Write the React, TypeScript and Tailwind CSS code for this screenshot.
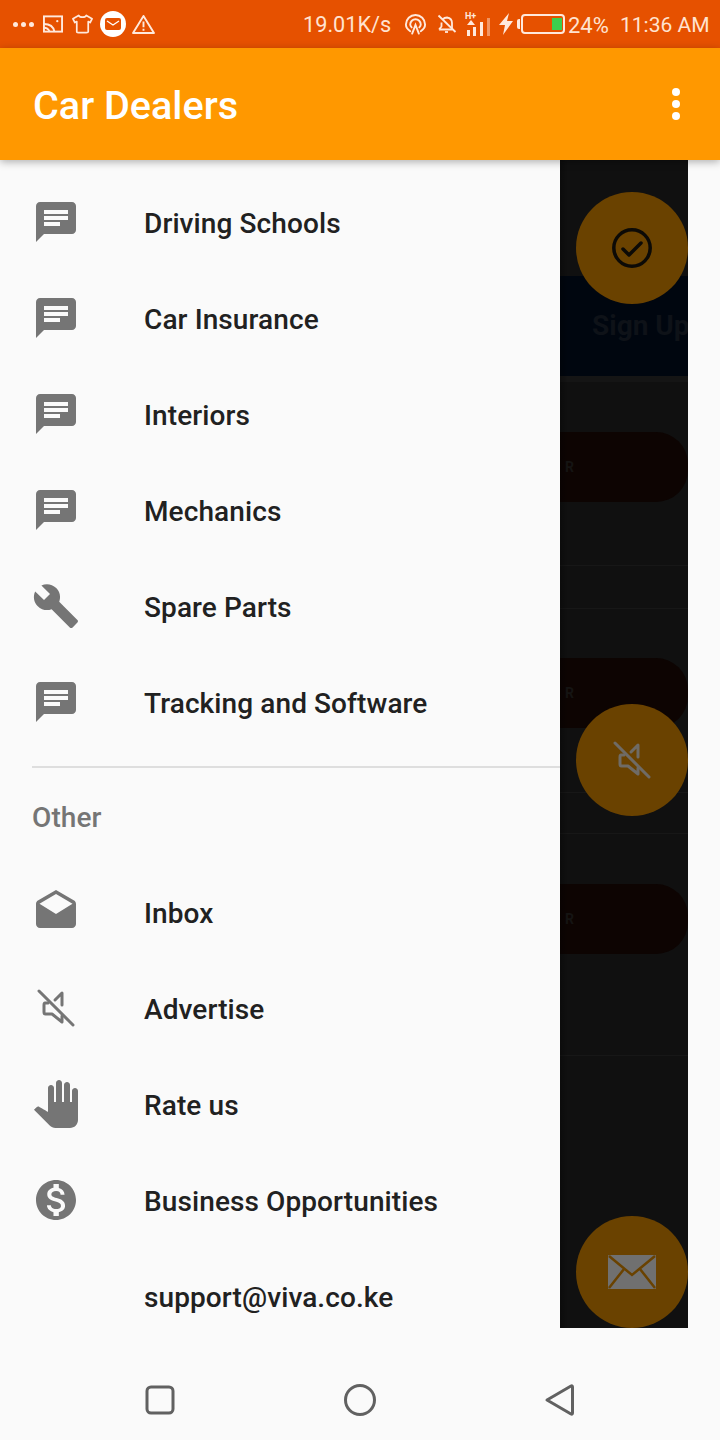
import type { ReactNode } from 'react';

const ROBOTO = "font-['Roboto',sans-serif]";

const Icon = ({ d }: { d: string }) => (
  <svg viewBox="0 0 24 24" className="w-12 h-12" fill="#757575">
    <path d={d} />
  </svg>
);

const CHAT = 'M20 2H4c-1.1 0-1.99.9-1.99 2L2 22l4-4h14c1.1 0 2-.9 2-2V4c0-1.1-.9-2-2-2zM6 9h12v2H6V9zm8 5H6v-2h8v2zm4-6H6V6h12v2z';
const WRENCH = 'M22.7 19l-9.1-9.1c.9-2.3.4-5-1.5-6.9-2-2-5-2.4-7.4-1.3L9 6 6 9 1.6 4.7C.4 7.1.9 10.1 2.9 12.1c1.9 1.9 4.6 2.4 6.9 1.5l9.1 9.1c.4.4 1 .4 1.4 0l2.3-2.3c.5-.4.5-1.1.1-1.4z';
const DRAFTS = 'M21.99 8c0-.72-.37-1.35-.94-1.7L12 1 2.95 6.3C2.38 6.65 2 7.28 2 8v10c0 1.1.9 2 2 2h16c1.1 0 2-.9 2-2l-.01-10zM12 13L3.74 7.84 12 3l8.26 4.84L12 13z';
const HAND = 'M23 5.5V20c0 2.2-1.8 4-4 4h-7.3c-1.08 0-2.1-.43-2.85-1.19L1 14.83s1.26-1.23 1.3-1.25c.22-.19.49-.29.79-.29.22 0 .42.06.6.16.04.01 4.31 2.46 4.31 2.46V4c0-.83.67-1.5 1.5-1.5S11 3.17 11 4v7h1V1.5c0-.83.67-1.5 1.5-1.5S15 .67 15 1.5V11h1V2.5c0-.83.67-1.5 1.5-1.5s1.5.67 1.5 1.5V11h1V5.5c0-.83.67-1.5 1.5-1.5s1.5.67 1.5 1.5z';
const MONEY = 'M12 2C6.48 2 2 6.48 2 12s4.48 10 10 10 10-4.48 10-10S17.52 2 12 2zm1.41 16.09V20h-2.67v-1.93c-1.71-.36-3.16-1.46-3.27-3.4h1.96c.1 1.05.82 1.87 2.65 1.87 1.96 0 2.4-.98 2.4-1.59 0-.83-.44-1.61-2.67-2.14-2.48-.6-4.18-1.62-4.18-3.67 0-1.72 1.39-2.84 3.11-3.21V4h2.67v1.95c1.86.45 2.79 1.86 2.87 3.39H14.3c-.05-1.11-.64-1.87-2.22-1.87-1.5 0-2.4.68-2.4 1.64 0 .84.65 1.39 2.67 1.91s4.18 1.39 4.18 3.91c-.01 1.83-1.38 2.83-3.12 3.16z';

const Mute = ({ color, size }: { color: string; size: string }) => (
  <svg viewBox="0 0 48 48" className={size} fill="none" stroke={color} strokeWidth="3" strokeLinejoin="round" strokeLinecap="round">
    <path d="M7 7L41 41" />
    <path d="M30 21V9L23 16" />
    <path d="M16 19H13C12 19 12 20 12 21V28C12 29 12.500 30 13.500 30H20L30 38V32" />
  </svg>
);

const Row = ({ icon, children }: { icon?: ReactNode; children: string }) => (
  <div className="flex items-center h-24 shrink-0">
    <div className="w-36 pl-8 pb-1 shrink-0">{icon}</div>
    <span className="text-[28px] tracking-[0.1px] font-medium text-[#212121]">{children}</span>
  </div>
);

const Pill = ({ mt }: { mt: string }) => (
  <div className={`${mt} h-[70px] shrink-0 rounded-r-[32px] bg-[#0d0402] flex items-center pl-[5px]`}>
    <span className="text-[14px] font-bold text-[#151413]">R</span>
  </div>
);

function StatusBar() {
  return (
    <div className="h-12 shrink-0 bg-[#e65100] flex items-center text-[22px] text-[#ffe3d0]">
      <div className="flex gap-[3px] ml-[13px]">
        <span className="w-[5px] h-[5px] rounded-full bg-[#ffe9dc]" />
        <span className="w-[5px] h-[5px] rounded-full bg-[#ffe9dc]" />
        <span className="w-[5px] h-[5px] rounded-full bg-[#ffe9dc]" />
      </div>
      <svg viewBox="0 0 21 18" className="w-[20px] h-[18px] ml-[9px]" fill="none" stroke="#ffe9dc" strokeWidth="2">
        <rect x="1" y="1" width="19" height="16" />
        <path d="M1 9C7 9 11 12 12 17M1 13C4 13 6 15 7 17" />
        <circle cx="15" cy="6" r="1.200" fill="#ffe9dc" stroke="none" />
      </svg>
      <svg viewBox="0 0 22 20" className="w-[21px] h-5 ml-[9px]" fill="none" stroke="#ffe9dc" strokeWidth="1.800" strokeLinejoin="round">
        <path d="M7 1C8 3.500 14 3.500 15 1L21 4.500 19 8.500 17 7.500V18C17 19 16 19 15 19H7C6 19 5 19 5 18V7.500L3 8.500 1 4.500z" />
      </svg>
      <div className="w-[26px] h-[26px] ml-[7px] rounded-full bg-white flex items-center justify-center">
        <svg viewBox="0 0 16 12" className="w-4 h-3">
          <rect width="16" height="12" rx="2" fill="#e65100" />
          <path d="M2 3L8 7L14 3" fill="none" stroke="#fff" strokeWidth="1.300" />
        </svg>
      </div>
      <svg viewBox="0 0 24 21" className="w-[23px] h-5 ml-[6px]" fill="none" stroke="#ffe9dc" strokeWidth="2" strokeLinejoin="round">
        <path d="M12 2L23 20H1z" />
        <path d="M12 8V14M12 15.500V17.500" />
      </svg>
      <span className="ml-[148px] mt-[3px] w-[88px] whitespace-nowrap text-[21.700px]">19.01K/s</span>
      <svg viewBox="0 0 24 24" className="w-[23px] h-[23px] ml-[13px]" fill="none" stroke="#ffe9dc" strokeWidth="2" strokeLinecap="round">
        <path d="M6.500 19C3.500 17 2 14.500 2 12C2 6.500 6.500 2 12 2S22 6.500 22 12C22 14.500 20.500 17 17.500 19" />
        <path d="M8 15C7 14 6.500 13 6.500 12C6.500 9 9 6.500 12 6.500S17.500 9 17.500 12C17.500 13 17 14 16 15" />
        <path d="M8.500 21.500L12 12.500L15.500 21.500" />
      </svg>
      <svg viewBox="0 0 20 20" className="w-5 h-5 ml-[10px]" fill="none" stroke="#ffe9dc" strokeWidth="1.800" strokeLinejoin="round">
        <path d="M2 15.500H15L15 9C15 6 13 4 10 3.500C8 3.500 7 4 5.500 5.500M4.500 8.500V12.500L2 15.500" />
        <path d="M1.500 1.500L18.500 18" />
        <path d="M8 18H11" />
      </svg>
      <svg viewBox="0 0 26 26" className="w-[26px] h-[26px] ml-[8px]" fill="#ffe9dc">
        <text x="0" y="8" fontSize="9" fontWeight="700" fontFamily="Roboto, sans-serif">H+</text>
        <rect x="2" y="19" width="3" height="6" />
        <rect x="8" y="16" width="3" height="9" />
        <path d="M6 9l4 5H2z" />
        <rect x="15" y="11" width="3" height="14" />
        <rect x="22" y="7" width="3" height="18" opacity="0.45" />
      </svg>
      <svg viewBox="0 0 14 22" className="w-[14px] h-[22px] ml-[8px]" fill="#ffe9dc">
        <path d="M10 0L0 12H6L4 22L14 8H8z" />
      </svg>
      <div className="ml-[4px] w-[3px] h-[10px] rounded-l-[2px] bg-[#ffe9dc]" />
      <div className="ml-[1px] w-[44px] h-[20px] rounded-[4px] border-2 border-[#ffe9dc] flex justify-end pr-[1px] items-center">
        <div className="w-[10px] h-[12px] bg-[#3ccf4e]" />
      </div>
      <span className="ml-[3px] mt-[3px] w-[52px] whitespace-nowrap">24%</span>
      <span className="mt-[3px] whitespace-nowrap text-[21px]">11:36 AM</span>
    </div>
  );
}

function Scrim() {
  return (
    <div className="relative w-32 shrink-0 bg-[#101010] flex flex-col overflow-hidden">
      <div className="h-[116px] shrink-0" />
      <div className="h-[100px] shrink-0 bg-[#00060f] pl-[32px] flex items-center">
        <span className="text-[28px] font-bold text-[#0e1218] whitespace-nowrap">Sign Up</span>
      </div>
      <div className="h-[6px] shrink-0 bg-[#151515]" />
      <Pill mt="mt-[50px]" />
      <div className="mt-[63px] h-px shrink-0 bg-[#171717]" />
      <div className="mt-[42px] h-px shrink-0 bg-[#171717]" />
      <Pill mt="mt-[49px]" />
      <div className="mt-[64px] h-px shrink-0 bg-[#171717]" />
      <div className="mt-[40px] h-px shrink-0 bg-[#171717]" />
      <Pill mt="mt-[50px]" />
      <div className="mt-[101px] h-px shrink-0 bg-[#171717]" />

      {/* drawer edge shadow */}
      <div className="absolute left-0 top-0 bottom-0 w-2 bg-gradient-to-r from-black/30 to-transparent" />

      <div className="absolute left-4 top-8 w-28 h-28 rounded-full bg-[#6a4200] flex items-center justify-center">
        <svg viewBox="0 0 40 40" className="w-10 h-10" fill="none" stroke="#0c0a06" strokeWidth="3.500" strokeLinecap="round" strokeLinejoin="round">
          <circle cx="20" cy="20" r="18.200" />
          <path d="M11 21L17 27L29 15" />
        </svg>
      </div>
      <div className="absolute left-4 top-[544px] w-28 h-28 rounded-full bg-[#6a4200] flex items-center justify-center">
        <Mute color="#6f6b65" size="w-12 h-12" />
      </div>
      <div className="absolute left-4 top-[1056px] w-28 h-28 rounded-full bg-[#6a4200] flex items-center justify-center">
        <svg viewBox="0 0 48 34" className="w-12 h-[34px]">
          <rect width="48" height="34" rx="1" fill="#707070" />
          <path d="M1 1L24 20L47 1M1 33L16 14M47 33L32 14" fill="none" stroke="#6a4200" strokeWidth="2.500" />
        </svg>
      </div>
    </div>
  );
}

export default function App() {
  return (
    <div className={`${ROBOTO} w-[720px] h-[1440px] flex flex-col overflow-hidden bg-[#fafafa]`}>
      <StatusBar />

      <div className="relative z-10 h-28 shrink-0 bg-[#ff9800] shadow-[0_2px_8px_rgba(0,0,0,0.3)] flex items-center justify-between pl-[33px] pr-10">
        <span className="mt-[3px] text-[39.600px] font-medium text-white">Car Dealers</span>
        <div className="flex flex-col gap-[4px]">
          <span className="w-2 h-2 rounded-full bg-white" />
          <span className="w-2 h-2 rounded-full bg-white" />
          <span className="w-2 h-2 rounded-full bg-white" />
        </div>
      </div>

      <div className="flex h-[1168px] shrink-0 overflow-hidden">
        <div className="w-[560px] shrink-0 pt-4 flex flex-col overflow-hidden">
          <Row icon={<Icon d={CHAT} />}>Driving Schools</Row>
          <Row icon={<Icon d={CHAT} />}>Car Insurance</Row>
          <Row icon={<Icon d={CHAT} />}>Interiors</Row>
          <Row icon={<Icon d={CHAT} />}>Mechanics</Row>
          <Row icon={<Icon d={WRENCH} />}>Spare Parts</Row>
          <Row icon={<Icon d={CHAT} />}>Tracking and Software</Row>
          <div className="ml-8 mt-[14px] h-[2px] shrink-0 bg-[#dedede]" />
          <div className="mt-[2px] h-24 shrink-0 pl-8 flex items-center text-[28px] tracking-[0.1px] font-medium text-[#757575]">Other</div>
          <Row icon={<Icon d={DRAFTS} />}>Inbox</Row>
          <Row icon={<Mute color="#757575" size="w-12 h-12" />}>Advertise</Row>
          <Row icon={<Icon d={HAND} />}>Rate us</Row>
          <Row icon={<Icon d={MONEY} />}>Business Opportunities</Row>
          <Row>support@viva.co.ke</Row>
        </div>
        <Scrim />
      </div>

      <div className="h-28 shrink-0 pt-8 flex items-center justify-center">
        <svg viewBox="0 0 480 40" className="w-[480px] h-10" fill="none" stroke="#616161" strokeWidth="3" strokeLinejoin="round">
          <rect x="27" y="7" width="26" height="26" rx="4" />
          <circle cx="240" cy="20" r="14.500" />
          <path d="M427 20L451 6C452 5.500 452.500 6 452.500 7V33C452.500 34 452 34.500 451 34z" />
        </svg>
      </div>
    </div>
  );
}
